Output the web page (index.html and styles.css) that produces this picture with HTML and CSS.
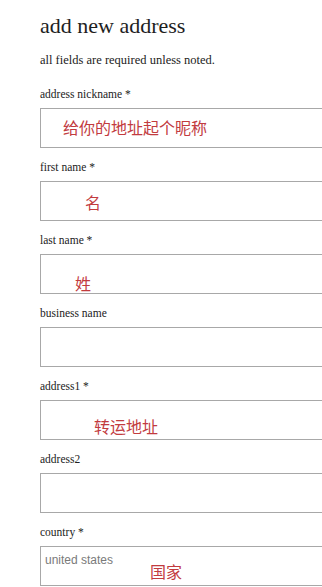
FILE: index.html
```html
<!DOCTYPE html>
<html lang="en">
<head>
<meta charset="utf-8">
<title>add new address</title>
<link rel="stylesheet" href="styles.css">
</head>
<body>
<main class="page">
  <h1 class="title">add new address</h1>
  <p class="intro">all fields are required unless noted.</p>
  <form class="form">
    <div class="field field--first">
      <label class="label">address nickname *</label>
      <div class="box"><span class="note note--nick">给你的地址起个昵称</span></div>
    </div>
    <div class="field">
      <label class="label">first name *</label>
      <div class="box"><span class="note note--first">名</span></div>
    </div>
    <div class="field">
      <label class="label">last name *</label>
      <div class="box"><span class="note note--last">姓</span></div>
    </div>
    <div class="field">
      <label class="label">business name</label>
      <div class="box"></div>
    </div>
    <div class="field">
      <label class="label">address1 *</label>
      <div class="box"><span class="note note--addr">转运地址</span></div>
    </div>
    <div class="field">
      <label class="label">address2</label>
      <div class="box"></div>
    </div>
    <div class="field">
      <label class="label">country *</label>
      <div class="box"><span class="value">united states</span><span class="note note--country">国家</span></div>
    </div>
  </form>
</main>
</body>
</html>
```

FILE: styles.css
```css
html, body {
  margin: 0;
  padding: 0;
  background: #ffffff;
}

.page {
  padding: 13px 0 0 40px;
  font-family: "Liberation Serif", "Times New Roman", serif;
  color: #222222;
}

.title {
  margin: 0;
  font-size: 22px;
  line-height: 26px;
  font-weight: normal;
  color: #1e1e1e;
}

.intro {
  margin: 14px 0 0 0;
  font-size: 12.5px;
  line-height: 14px;
  color: #222222;
}

.form {
  margin: 0;
}

.field {
  display: flex;
  flex-direction: column;
  margin-top: 12px;
}

.field--first {
  margin-top: 20px;
}

.label {
  display: block;
  font-size: 11.5px;
  line-height: 14px;
  margin-bottom: 7px;
  color: #222222;
}

.box {
  box-sizing: border-box;
  height: 40px;
  border: 1px solid #a8a8a8;
  border-right: none;
  display: flex;
  align-items: flex-start;
  background: #ffffff;
}

.note {
  font-family: "Noto Sans CJK SC", "Noto Sans", sans-serif;
  font-size: 16px;
  line-height: 20px;
  color: #c23b3f;
  white-space: nowrap;
}

.note--nick { margin: 8px 0 0 22px; }
.note--first { margin: 10px 0 0 44px; }
.note--last { margin: 18px 0 0 34px; }
.note--addr { margin: 15px 0 0 53px; }
.note--country { margin: 14px 0 0 37px; }

.value {
  font-family: "Liberation Sans", Arial, sans-serif;
  font-size: 12px;
  line-height: 14px;
  color: #7a7a7a;
  margin: 6px 0 0 4px;
  white-space: nowrap;
}
```
